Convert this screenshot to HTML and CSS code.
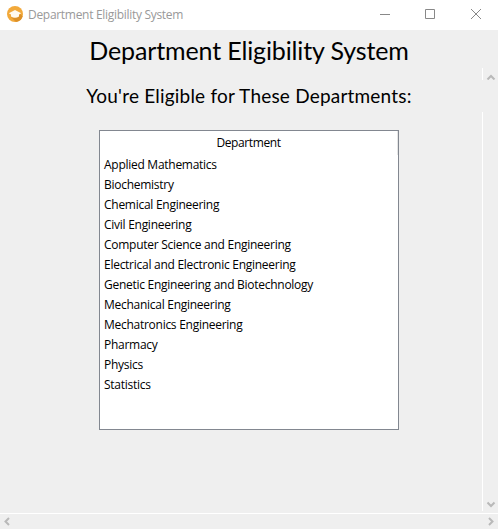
FILE: index.html
```html
<!DOCTYPE html>
<html lang="en">
<head>
<meta charset="utf-8">
<title>Department Eligibility System</title>
<link rel="stylesheet" href="styles.css">
</head>
<body>
<header class="titlebar">
  <svg class="app-icon" width="16" height="16" viewBox="0 0 16 16"><circle cx="8" cy="8" r="8" fill="#f2a93b"/><path d="M8 11.5L12.5 9V7l3.200 3.200A8 8 0 0 1 9 15.900L4 11z" fill="#dc9028"/><path d="M1.800 7.200L8 4l6.200 3.200-2.200 1.200v2.100Q8 13 4 10.500V8.400z" fill="#fffaf0"/></svg>
  <span class="caption">Department Eligibility System</span>
  <svg class="controls" width="138" height="30" viewBox="0 0 138 30" fill="none" stroke="#888"><path d="M20 14.500h10M65.500 9.500h9v9h-9z"/><path d="M111 9l10 10M121 9l-10 10"/></svg>
</header>
<main class="body">
  <section class="content">
    <h1>Department Eligibility System</h1>
    <h2>You're Eligible for These Departments:</h2>
    <div class="table">
      <div class="head">Department</div>
      <ul>
        <li>Applied Mathematics</li>
        <li>Biochemistry</li>
        <li>Chemical Engineering</li>
        <li>Civil Engineering</li>
        <li>Computer Science and Engineering</li>
        <li>Electrical and Electronic Engineering</li>
        <li>Genetic Engineering and Biotechnology</li>
        <li>Mechanical Engineering</li>
        <li>Mechatronics Engineering</li>
        <li>Pharmacy</li>
        <li>Physics</li>
        <li>Statistics</li>
      </ul>
    </div>
  </section>
  <aside class="vscroll">
    <svg class="arrow-up" width="15" height="12" viewBox="0 0 15 12"><path d="M4.500 11.500L8 8l3.500 3.500"/></svg>
    <div class="track"><svg width="15" height="16" viewBox="0 0 15 16"><path d="M4.500 7.500L8 11l3.500-3.500"/></svg></div>
  </aside>
</main>
<footer class="hscroll">
  <svg width="16" height="15" viewBox="0 0 16 15"><path d="M9 4L5.500 7.500L9 11"/></svg>
  <svg width="16" height="15" viewBox="0 0 16 15"><path d="M7 4l3.500 3.500L7 11"/></svg>
</footer>
</body>
</html>
```
FILE: styles.css
```css
* { box-sizing: border-box; }
body { margin: 0; width: 498px; height: 529px; overflow: hidden; display: flex; flex-direction: column; background: #efefef; color: #000; font: 12px/20px "Open Sans", sans-serif; }
.titlebar { height: 30px; flex: none; display: flex; align-items: center; padding-left: 7px; background: #fff; color: #999; }
.app-icon { flex: none; margin-right: 5px; margin-top: -2px; }
.caption { flex: 1; white-space: nowrap; letter-spacing: -0.3px; }
.controls { flex: none; }
.body { height: 483px; flex: none; display: flex; }
.content { width: 482px; padding-left: 16px; display: flex; flex-direction: column; align-items: center; }
h1, h2 { margin: 0; font-family: Lato, sans-serif; font-weight: 400; white-space: nowrap; }
h1 { font-size: 25px; line-height: 40px; letter-spacing: -0.13px; }
h2 { font-size: 19px; line-height: 30px; margin-top: 11px; letter-spacing: 0.2px; }
.table { width: 300px; height: 300px; margin-top: 19px; background: #fff; border: 1px solid #828790; }
.head { height: 24px; line-height: 24px; text-align: center; border-right: 1px solid #e5e5e5; letter-spacing: -0.4px; }
ul { list-style: none; margin: 0; padding: 0 4px; letter-spacing: -0.27px; }
li { height: 20px; white-space: nowrap; }
.vscroll { width: 16px; display: flex; flex-direction: column; padding-top: 38px; }
.arrow-up, .track { border-left: 1px solid #fff; }
.arrow-up { width: 16px; flex: none; }
.track { margin-top: 32px; height: 399px; display: flex; align-items: flex-end; }
.hscroll { height: 16px; flex: none; border-top: 1px solid #fff; display: flex; justify-content: space-between; }
.vscroll path, .hscroll path { fill: none; stroke: #b9b9b9; stroke-width: 2; }
```
